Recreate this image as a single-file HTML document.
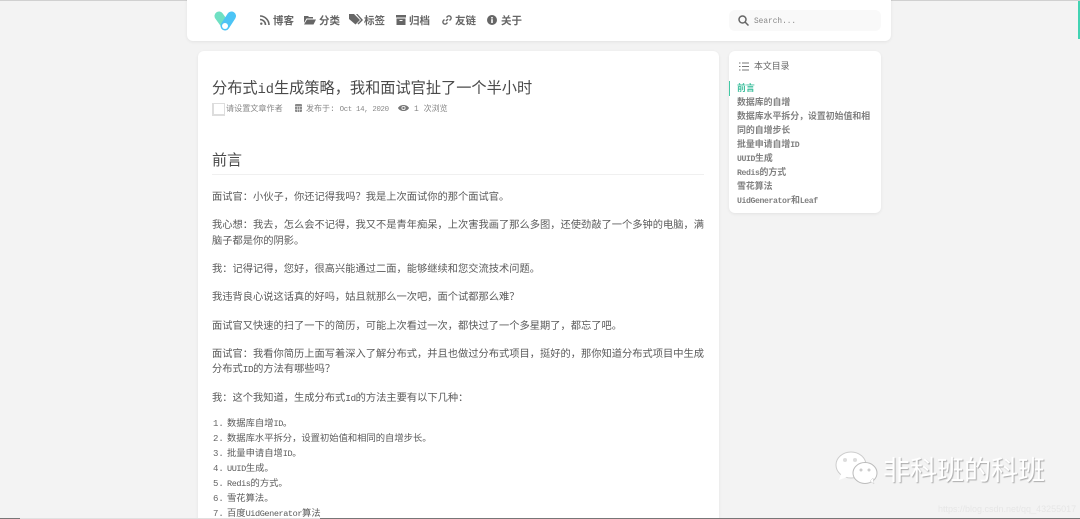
<!DOCTYPE html>
<html><head><meta charset="utf-8">
<style>
html,body{margin:0;padding:0;width:1080px;height:519px;overflow:hidden;background:#f3f3f3;}
body{position:relative;font-family:"Liberation Mono","Noto Sans CJK SC",monospace;color:#555;}
.a{position:absolute;white-space:nowrap;}
.card{position:absolute;background:#fff;border-radius:6px;box-shadow:0 1px 3px rgba(0,0,0,.07);}
.nav{font-size:10.5px;font-weight:700;color:#666;line-height:14px;top:15px;}
.p{font-size:10.25px;color:#5a5a5a;line-height:14px;left:212px;}
.l{font-size:9.3px;color:#5a5a5a;line-height:14px;left:227px;}
.n{font-size:9px;color:#666;line-height:14px;left:213px;}
.t{font-size:8.9px;font-weight:700;color:#808080;line-height:14px;left:737px;}
.m{font-size:.92em;letter-spacing:-.05em;}
svg{position:absolute;}
</style></head><body>
<div class="a" style="left:0;top:0;width:1080px;height:1px;background:#d0d0d0"></div>
<div class="card" style="left:187px;top:-6px;width:704px;height:47px"></div>
<div class="card" style="left:198px;top:51px;width:521px;height:480px"></div>
<div class="card" style="left:729px;top:51px;width:152px;height:162px"></div>
<div class="a" style="left:1078px;top:1px;width:2px;height:38px;background:#42d3b3"></div>

<svg style="left:214px;top:10px" width="23" height="22" viewBox="0 0 23 22">
<path d="M5 6 L11.5 15" stroke="#6fe0c3" stroke-width="9" stroke-linecap="round"/>
<path d="M17.5 6 L11 16" stroke="#4cc4f5" stroke-width="9" stroke-linecap="round"/>
<circle cx="11" cy="16" r="3" fill="#fff"/>
</svg>

<svg style="left:260px;top:15px" width="10" height="10" viewBox="0 0 10 10" fill="none" stroke="#666" stroke-width="1.6"><path d="M0 1 A9 9 0 0 1 9 10"/><path d="M0 4.500 A5.500 5.500 0 0 1 5.500 10"/><circle cx="1.300" cy="8.700" r="1.200" fill="#666" stroke="none"/></svg>
<div class="a nav" style="left:273px">博客</div>
<svg style="left:304px;top:15px" width="12" height="10" viewBox="0 0 12 10" fill="#666"><path d="M0 1h4l1 1h4v1.500H2.500L0 8z"/><path d="M3 4.500h9L9.500 9.500H0z"/></svg>
<div class="a nav" style="left:319px">分类</div>
<svg style="left:349px;top:14px" width="14" height="11" viewBox="0 0 14 11" fill="#666"><path d="M0 0h5l6 6-4.500 4.500L0 5z"/><path d="M7 0h1.500l5.500 6-4.500 4.500-1-1L12 6z"/></svg>
<div class="a nav" style="left:364px">标签</div>
<svg style="left:396px;top:15px" width="10" height="10" viewBox="0 0 10 10" fill="#666"><rect width="10" height="2.500"/><path d="M.5 3.500h9V10H.5z"/><rect x="3.500" y="5" width="3" height="1" fill="#fff"/></svg>
<div class="a nav" style="left:409px">归档</div>
<svg style="left:442px;top:15px" width="10" height="10" viewBox="0 0 10 10" fill="none" stroke="#666" stroke-width="1.400"><path d="M4 6 L6 4"/><path d="M4.500 2.500l1-1a2 2 0 0 1 3 3l-1 1"/><path d="M5.500 7.500l-1 1a2 2 0 0 1-3-3l1-1"/></svg>
<div class="a nav" style="left:455px">友链</div>
<svg style="left:487px;top:15px" width="10" height="10" viewBox="0 0 10 10"><circle cx="5" cy="5" r="5" fill="#666"/><rect x="4.200" y="4.200" width="1.600" height="3.800" fill="#fff"/><rect x="4.200" y="2" width="1.600" height="1.500" fill="#fff"/></svg>
<div class="a nav" style="left:501px">关于</div>

<div class="a" style="left:729px;top:10px;width:152px;height:21px;background:#f9f9f9;border-radius:6px"></div>
<svg style="left:738px;top:15px" width="11" height="11" viewBox="0 0 11 11" fill="none" stroke="#666" stroke-width="1.500"><circle cx="4.500" cy="4.500" r="3.500"/><path d="M7 7l3.500 3.500"/></svg>
<div class="a" style="left:754px;top:15px;font-size:7.8px;line-height:14px;color:#888;">Search...</div>

<div class="a" style="left:212px;top:78px;font-size:15.2px;line-height:22px;color:#4a4a4a;">分布式<span style="font-size:.9em">id</span>生成策略，我和面试官扯了一个半小时</div>
<div class="a" style="left:212px;top:103px;width:10px;height:10px;border:1px solid #ddd;border-left-width:2px;border-bottom-width:2px"></div>
<div class="a" style="left:226px;top:103px;font-size:8.1px;line-height:14px;color:#888;">请设置文章作者</div>
<svg style="left:295px;top:104px" width="7" height="8" viewBox="0 0 7 8" fill="#888"><rect width="7" height="8" rx="1"/><path d="M0 2.500h7M2.300 2.500v5.500M4.700 2.500v5.500M0 5.200h7" stroke="#fff" stroke-width=".5"/></svg>
<div class="a" style="left:306px;top:103px;font-size:8px;line-height:14px;color:#888;">发布于: <span style="font-size:7.4px;letter-spacing:-.34px">Oct 14, 2020</span></div>
<svg style="left:398px;top:104px" width="11" height="8" viewBox="0 0 11 8"><path d="M0 4C2 0 9 0 11 4C9 8 2 8 0 4z" fill="#777"/><circle cx="5.500" cy="4" r="2" fill="#fff"/><circle cx="5.500" cy="4" r="1.200" fill="#777"/></svg>
<div class="a" style="left:414px;top:103px;font-size:8px;line-height:14px;color:#888;">1 次浏览</div>

<div class="a" style="left:212px;top:151px;font-size:15px;line-height:22px;color:#4a4a4a;">前言</div>
<div class="a" style="left:212px;top:174px;width:492px;height:1px;background:#f0f0f0"></div>

<div class="a p" style="top:191px">面试官：小伙子，你还记得我吗？我是上次面试你的那个面试官。</div>
<div class="a p" style="top:219px">我心想：我去，怎么会不记得，我又不是青年痴呆，上次害我画了那么多图，还使劲敲了一个多钟的电脑，满</div>
<div class="a p" style="top:235px">脑子都是你的阴影。</div>
<div class="a p" style="top:263px">我：记得记得，您好，很高兴能通过二面，能够继续和您交流技术问题。</div>
<div class="a p" style="top:291px">我违背良心说这话真的好吗，姑且就那么一次吧，面个试都那么难？</div>
<div class="a p" style="top:320px">面试官又快速的扫了一下的简历，可能上次看过一次，都快过了一个多星期了，都忘了吧。</div>
<div class="a p" style="top:348px">面试官：我看你简历上面写着深入了解分布式，并且也做过分布式项目，挺好的，那你知道分布式项目中生成</div>
<div class="a p" style="top:363px">分布式<span class="m">ID</span>的方法有哪些吗？</div>
<div class="a p" style="top:392px">我：这个我知道，生成分布式<span class="m">Id</span>的方法主要有以下几种：</div>

<div class="a n" style="top:417px">1.</div><div class="a l" style="top:417px">数据库自增<span class="m">ID</span>。</div>
<div class="a n" style="top:432px">2.</div><div class="a l" style="top:432px">数据库水平拆分，设置初始值和相同的自增步长。</div>
<div class="a n" style="top:447px">3.</div><div class="a l" style="top:447px">批量申请自增<span class="m">ID</span>。</div>
<div class="a n" style="top:462px">4.</div><div class="a l" style="top:462px"><span class="m">UUID</span>生成。</div>
<div class="a n" style="top:477px">5.</div><div class="a l" style="top:477px"><span class="m">Redis</span>的方式。</div>
<div class="a n" style="top:492px">6.</div><div class="a l" style="top:492px">雪花算法。</div>
<div class="a n" style="top:507px">7.</div><div class="a l" style="top:507px">百度<span class="m">UidGenerator</span>算法</div>

<svg style="left:739px;top:62px" width="10" height="9" viewBox="0 0 10 9" stroke="#777" stroke-width="1"><path d="M3 1h7M3 4.500h7M3 8h7M0 1h1.500M0 4.500h1.500M0 8h1.500"/></svg>
<div class="a" style="left:754px;top:60px;font-size:8.9px;line-height:14px;color:#666;">本文目录</div>
<div class="a" style="left:729px;top:81px;width:1px;height:15px;background:#42c9a5"></div>
<div class="a t" style="top:82px;color:#42c09f">前言</div>
<div class="a t" style="top:96px">数据库的自增</div>
<div class="a t" style="top:110px">数据库水平拆分，设置初始值和相</div>
<div class="a t" style="top:124px">同的自增步长</div>
<div class="a t" style="top:138px">批量申请自增<span class="m">ID</span></div>
<div class="a t" style="top:152px"><span class="m">UUID</span>生成</div>
<div class="a t" style="top:166px"><span class="m">Redis</span>的方式</div>
<div class="a t" style="top:180px">雪花算法</div>
<div class="a t" style="top:194px"><span class="m">UidGenerator</span>和<span class="m">Leaf</span></div>

<svg style="left:834px;top:450px" width="46" height="36" viewBox="0 0 46 36">
<ellipse cx="17" cy="15" rx="15" ry="13" fill="#fff" stroke="#ccc"/>
<path d="M7 24l-2 6 8-3z" fill="#fff"/>
<ellipse cx="31" cy="23" rx="12" ry="10.500" fill="#fff" stroke="#bbb"/>
<path d="M36 31l4 3-1-6z" fill="#fff" stroke="#ccc" stroke-width=".5"/>
<circle cx="11" cy="10" r="2" fill="#ddd"/><circle cx="21" cy="10" r="2" fill="#ddd"/>
<circle cx="27" cy="20" r="1.500" fill="#ccc"/><circle cx="35" cy="20" r="1.500" fill="#ccc"/>
</svg>
<div class="a" style="left:883px;top:453px;font-family:'Liberation Sans','Noto Sans CJK SC',sans-serif;font-size:27px;line-height:36px;color:#fff;text-shadow:1px 1px 1px #aaa;">非科班的科班</div>
<div class="a" style="left:938px;top:503px;font-family:'Liberation Sans',sans-serif;font-size:9px;line-height:12px;color:#e6e6e6;">https://blog.csdn.net/qq_43255017</div>

<div class="a" style="left:0;top:518px;width:1080px;height:1px;background:#777"></div>
<div class="a" style="left:20px;top:518px;width:300px;height:1px;background:#e0e0e0"></div>
</body></html>
